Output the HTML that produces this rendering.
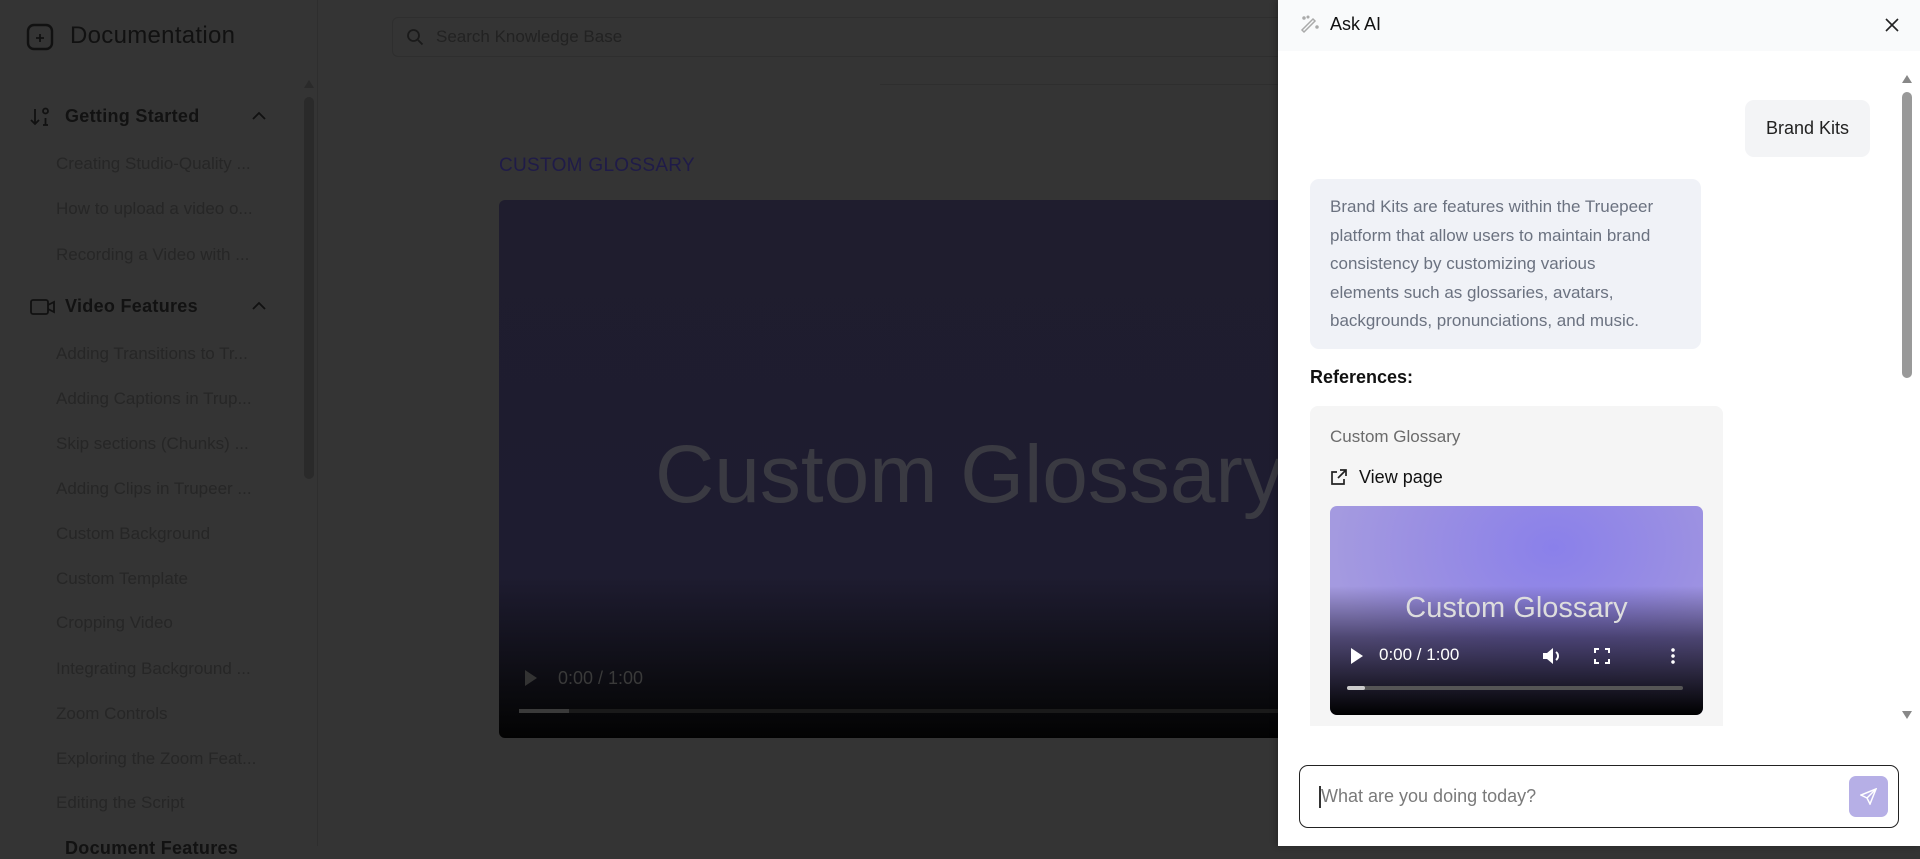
<!DOCTYPE html>
<html><head><meta charset="utf-8"><style>
*{box-sizing:border-box;margin:0;padding:0}
body{width:1920px;height:846px;overflow:hidden;background:#343434;font-family:"Liberation Sans",sans-serif;position:relative}
.abs{position:absolute}
.side{left:0;top:0;width:318px;height:846px;border-right:1px solid #2e2e2e}
.item{position:absolute;left:56px;font-size:17px;color:#262626;white-space:nowrap}
.hdr{position:absolute;left:65px;font-size:18px;font-weight:bold;color:#121212;letter-spacing:.3px}
.panel{left:1278px;top:0;width:642px;height:846px;background:#fff;box-shadow:-2px 0 6px rgba(0,0,0,.25)}
</style></head><body>
<!-- sidebar -->
<div class="abs side">
  <svg class="abs" style="left:26px;top:23px" width="28" height="28" viewBox="0 0 28 28"><rect x="2" y="2" width="24" height="24" rx="6" fill="none" stroke="#111" stroke-width="2.4"/><path d="M14 11v8M10 15h8" stroke="#111" stroke-width="1.8"/></svg>
  <div class="abs" style="left:70px;top:22px;font-size:24px;color:#111;letter-spacing:.3px">Documentation</div>
  <div class="abs" style="left:304px;top:80px;width:0;height:0;border-left:5px solid transparent;border-right:5px solid transparent;border-bottom:8px solid #2a2a2a"></div>
  <div class="abs" style="left:304px;top:97px;width:10px;height:382px;background:#2a2a2a;border-radius:5px"></div>
  <svg class="abs" style="left:30px;top:106px" width="22" height="22" viewBox="0 0 22 22" fill="none" stroke="#111" stroke-width="1.8"><path d="M5 3v15M1 14l4 4 4-4"/><circle cx="15.5" cy="5" r="2.5"/><path d="M15.5 12v7M13 19h5"/></svg>
  <div class="hdr" style="top:106px">Getting Started</div>
  <svg class="abs" style="left:251px;top:110px" width="16" height="12" viewBox="0 0 16 12" fill="none" stroke="#111" stroke-width="1.8"><path d="M2 9l6-6 6 6"/></svg>
  <div class="item" style="top:154px">Creating Studio-Quality ...</div>
  <div class="item" style="top:199px">How to upload a video o...</div>
  <div class="item" style="top:245px">Recording a Video with ...</div>
  <svg class="abs" style="left:30px;top:298px" width="26" height="18" viewBox="0 0 26 18" fill="none" stroke="#111" stroke-width="1.8"><rect x="1" y="2" width="17" height="14" rx="2"/><path d="M18 7l6-3v10l-6-3"/></svg>
  <div class="hdr" style="top:296px">Video Features</div>
  <svg class="abs" style="left:251px;top:300px" width="16" height="12" viewBox="0 0 16 12" fill="none" stroke="#111" stroke-width="1.8"><path d="M2 9l6-6 6 6"/></svg>
  <div class="item" style="top:344px">Adding Transitions to Tr...</div>
  <div class="item" style="top:389px">Adding Captions in Trup...</div>
  <div class="item" style="top:434px">Skip sections (Chunks) ...</div>
  <div class="item" style="top:479px">Adding Clips in Trupeer ...</div>
  <div class="item" style="top:524px">Custom Background</div>
  <div class="item" style="top:569px">Custom Template</div>
  <div class="item" style="top:613px">Cropping Video</div>
  <div class="item" style="top:659px">Integrating Background ...</div>
  <div class="item" style="top:704px">Zoom Controls</div>
  <div class="item" style="top:749px">Exploring the Zoom Feat...</div>
  <div class="item" style="top:793px">Editing the Script</div>
  <div class="hdr" style="top:838px">Document Features</div>
</div>
<!-- main -->
<div class="abs" style="left:392px;top:17px;width:960px;height:40px;border:1px solid #2e2e2e;border-radius:6px"></div>
<svg class="abs" style="left:406px;top:28px" width="18" height="18" viewBox="0 0 18 18" fill="none" stroke="#1a1a1a" stroke-width="1.8"><circle cx="7.5" cy="7.5" r="5.5"/><path d="M12 12l4.5 4.5"/></svg>
<div class="abs" style="left:436px;top:27px;font-size:17px;color:#222">Search Knowledge Base</div>
<div class="abs" style="left:880px;top:84px;width:400px;height:1px;background:#2e2e2e"></div>
<div class="abs" style="left:499px;top:155px;font-size:19px;color:#1f1b48;letter-spacing:.3px">CUSTOM GLOSSARY</div>
<div class="abs" style="left:499px;top:200px;width:800px;height:538px;border-radius:6px;background:linear-gradient(180deg,#1f1d2e 0%,#1e1c30 70%,#0a0a0e 92%,#030303 100%);overflow:hidden">
  <div class="abs" style="left:156px;top:228px;font-size:82px;color:#3a3a42;white-space:nowrap">Custom Glossary</div>
  <div class="abs" style="left:26px;top:470px;width:0;height:0;border-top:8px solid transparent;border-bottom:8px solid transparent;border-left:12px solid #333"></div>
  <div class="abs" style="left:59px;top:468px;font-size:18px;color:#3a3a3a">0:00 / 1:00</div>
  <div class="abs" style="left:20px;top:509px;width:780px;height:4px;background:#1a1a1a"></div>
  <div class="abs" style="left:20px;top:509px;width:50px;height:4px;background:#3a3a3a"></div>
</div>
<!-- panel -->
<div class="abs panel">
  <div class="abs" style="left:0;top:0;width:642px;height:51px;background:#f9fafb"></div>
  <svg class="abs" style="left:22px;top:15px" width="20" height="20" viewBox="0 0 20 20" fill="none" stroke="#aaa" stroke-width="1.5"><path d="M4 17L15 6l-2-2L2 15z"/><circle cx="4" cy="3" r="1" fill="#aaa"/><circle cx="17" cy="12" r="1" fill="#aaa"/><circle cx="8" cy="2" r=".8" fill="#aaa"/></svg>
  <div class="abs" style="left:52px;top:14px;font-size:18px;color:#111">Ask AI</div>
  <svg class="abs" style="left:607px;top:18px" width="14" height="14" viewBox="0 0 14 14" stroke="#222" stroke-width="1.6"><path d="M1 1l12 12M13 1L1 13"/></svg>
  <div class="abs" style="left:624px;top:75px;width:0;height:0;border-left:5px solid transparent;border-right:5px solid transparent;border-bottom:8px solid #888"></div>
  <div class="abs" style="left:624px;top:92px;width:10px;height:286px;background:#999;border-radius:5px"></div>
  <div class="abs" style="left:624px;top:711px;width:0;height:0;border-left:5px solid transparent;border-right:5px solid transparent;border-top:8px solid #888"></div>
  <div class="abs" style="left:467px;top:100px;width:125px;height:57px;background:#f3f4f6;border-radius:9px;font-size:18px;color:#222;line-height:57px;text-align:center">Brand Kits</div>
  <div class="abs" style="left:32px;top:179px;width:391px;height:170px;background:#f0f2f7;border-radius:9px;padding:14px 36px 14px 20px;font-size:17px;line-height:28.6px;color:#6b7280">Brand Kits are features within the Truepeer platform that allow users to maintain brand consistency by customizing various elements such as glossaries, avatars, backgrounds, pronunciations, and music.</div>
  <div class="abs" style="left:32px;top:367px;font-size:18px;font-weight:bold;color:#111">References:</div>
  <div class="abs" style="left:32px;top:406px;width:413px;height:320px;background:#f5f5f5;border-radius:8px 8px 0 0"></div>
  <div class="abs" style="left:52px;top:427px;font-size:17px;color:#6b6b6b">Custom Glossary</div>
  <svg class="abs" style="left:52px;top:469px" width="17" height="17" viewBox="0 0 17 17" fill="none" stroke="#222" stroke-width="1.7"><path d="M7 3H2v12h12v-5M10 1h6v6M16 1L8 9"/></svg>
  <div class="abs" style="left:81px;top:467px;font-size:18px;color:#111">View page</div>
  <div class="abs" style="left:52px;top:506px;width:373px;height:209px;border-radius:7px;overflow:hidden;background:radial-gradient(ellipse at 60% 20%,#8a80ea 0%,#9b90e2 45%,#a49ae0 70%);">
    <div class="abs" style="left:0;top:80px;width:373px;height:129px;background:linear-gradient(180deg,rgba(0,0,0,0) 0%,rgba(20,15,40,.6) 40%,#000 100%)"></div>
    <div class="abs" style="left:0;top:86px;width:373px;text-align:center;font-size:29px;color:#ddd">Custom Glossary</div>
    <div class="abs" style="left:21px;top:142px;width:0;height:0;border-top:8px solid transparent;border-bottom:8px solid transparent;border-left:12px solid #fff"></div>
    <div class="abs" style="left:49px;top:139px;font-size:17px;color:#fff">0:00 / 1:00</div>
    <svg class="abs" style="left:212px;top:140px" width="22" height="20" viewBox="0 0 22 20" fill="#fff"><path d="M1 7h4l6-5v16l-6-5H1z"/><path d="M14 6a5 5 0 0 1 0 8" stroke="#fff" stroke-width="2" fill="none"/></svg>
    <svg class="abs" style="left:264px;top:142px" width="16" height="16" viewBox="0 0 16 16" fill="none" stroke="#fff" stroke-width="2"><path d="M1 5V1h4M11 1h4v4M15 11v4h-4M5 15H1v-4"/></svg>
    <div class="abs" style="left:341px;top:141px;width:4px;height:18px;background:radial-gradient(circle,#fff 1.6px,transparent 2px) 0 0/4px 6px"></div>
    <div class="abs" style="left:17px;top:180px;width:336px;height:4px;background:#555;border-radius:2px"></div>
    <div class="abs" style="left:17px;top:180px;width:18px;height:4px;background:#ccc;border-radius:2px"></div>
  </div>
  <div class="abs" style="left:21px;top:765px;width:600px;height:63px;border:1.5px solid #222;border-radius:9px"></div>
  <div class="abs" style="left:41px;top:786px;width:1.5px;height:22px;background:#333"></div>
  <div class="abs" style="left:43px;top:786px;font-size:18px;color:#7a7a7a">What are you doing today?</div>
  <div class="abs" style="left:571px;top:776px;width:39px;height:41px;background:#b6afe6;border-radius:7px"></div>
  <svg class="abs" style="left:582px;top:788px" width="17" height="17" viewBox="0 0 17 17" fill="none" stroke="#fff" stroke-width="1.5"><path d="M16 1L1 7l6 3 3 6z"/><path d="M16 1L7 10"/></svg>
</div>
</body></html>
